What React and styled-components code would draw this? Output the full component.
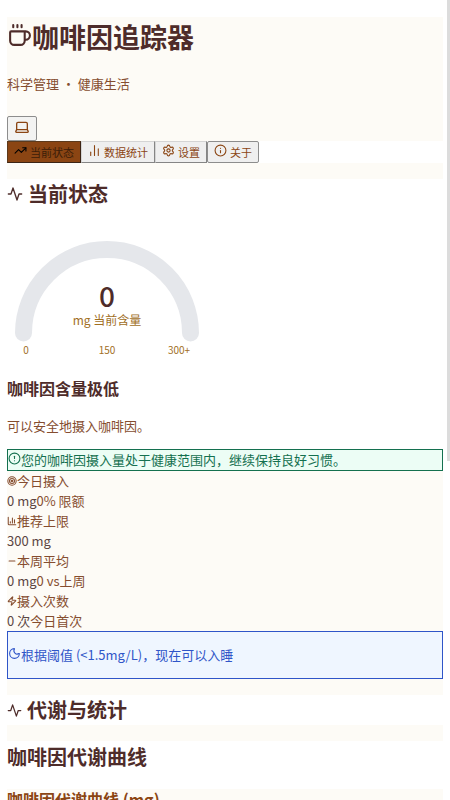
import React, { useState } from "react";
import styled, { createGlobalStyle, css } from "styled-components";
import {
  ChartColumn,
  ChartNoAxesColumn,
  CircleAlert,
  Coffee,
  Info,
  Minus,
  Moon,
  Settings,
  Target,
  TrendingUp,
  Zap,
} from "lucide-react";

const colors = {
  cream: "#fdfbf6",
  espresso: "#4e2c2a",
  text: "#854d2f",
  accent: "#8b4513",
  muted: "#a16f1f",
  track: "#e5e7eb",
};

const GlobalStyle = createGlobalStyle`
  html {
    scrollbar-width: none;
  }

  body {
    margin: 0 7px;
    background: #fff;
    color: ${colors.text};
    font: 13px/20px "Noto Sans CJK SC", sans-serif;
  }
`;

const ScrollThumb = styled.div`
  position: fixed;
  top: 0;
  right: 0;
  width: 3px;
  height: 461px;
  background: #dcdcdc;
`;

const Page = styled.div`
  padding-top: 17px;
`;

const Header = styled.header`
  background: ${colors.cream};
`;

const Title = styled.h1`
  display: flex;
  align-items: center;
  margin: 0;
  color: ${colors.espresso};
  font-size: 27px;
  line-height: 40px;

  svg {
    margin-bottom: 4px;
  }
`;

const Subtitle = styled.p`
  margin: 0;
  padding: 17px 0 22px;
`;

const Button = styled.button`
  margin: 0;
  padding: 0 6px;
  border: 1px solid #8d8d8d;
  border-radius: 2px;
  background: #efefef;
  color: ${colors.accent};
  font: 11px/20px "Noto Sans CJK SC", sans-serif;
  display: inline-flex;
  align-items: center;
  gap: 3px;

  svg {
    margin-bottom: 4px;
  }
`;

const ThemeButton = styled(Button)`
  height: 25px;
  vertical-align: top;
  background: #f3f3f2;
`;

const Tabs = styled.nav`
  display: flex;
`;

const Tab = styled(Button)`
  &:not(:last-child) {
    border-color: #d4d4d4 #858585 #858585 #d4d4d4;
    border-radius: 0;
  }

  ${({ $active }) =>
    $active &&
    css`
      &&:not(:last-child) {
        border-color: #5d3a1c #3c2415 #3c2415 #5d3a1c;
      }
      background: ${colors.accent};
      color: #000;

      span {
        color: #3c1d08;
      }
    `}
`;

const Content = styled.main`
  padding-top: 16px;
  background: ${colors.cream};
`;

const Section = styled.section`
  background: #fff;
`;

const SectionTitle = styled.h2`
  display: flex;
  align-items: center;
  gap: 5px;
  margin: 0;
  padding-bottom: ${({ $flush }) => ($flush ? "0" : "16px")};
  background: #fff;
  color: ${colors.espresso};
  font-size: 20px;
  line-height: 30px;
`;

const Gauge = styled.svg`
  display: block;
  width: 200px;
  height: 133px;
  font-family: "Noto Sans CJK SC", sans-serif;
`;

const Status = styled.div`
  padding: 18px 0 13px;

  h3 {
    margin: 0;
    color: ${colors.espresso};
    font-size: 16px;
    line-height: 24px;
  }

  p {
    margin: 0;
    padding-top: 16px;
  }
`;

const Notice = styled.div`
  display: flex;
  align-items: center;
  padding: ${({ $roomy }) => ($roomy ? "13px 0" : "0")};
  border: 1px solid;
  color: ${({ $tone }) => ($tone === "info" ? "#2f55c8" : "#14704f")};
  background: ${({ $tone }) => ($tone === "info" ? "#eff6ff" : "#ecfdf5")};

  svg {
    margin-bottom: 3px;
  }
`;

const Stats = styled.dl`
  margin: 0;

  dt {
    display: flex;
    align-items: center;
  }

  dd {
    margin: 0;
  }
`;

const Value = styled.span`
  color: #5c4643;
`;

const Gap = styled.div`
  height: 16px;
`;

const ChartHeading = styled.h2`
  margin: 0;
  padding-bottom: 16px;
  background: #fff;
  color: ${colors.espresso};
  font-size: 20px;
  line-height: 32px;
`;

const ChartCaption = styled.h3`
  margin: 0;
  color: ${colors.accent};
  font-size: 16px;
  line-height: 20px;
`;

const TABS = [
  { id: "status", label: "当前状态", icon: TrendingUp },
  { id: "stats", label: "数据统计", icon: ChartNoAxesColumn },
  { id: "settings", label: "设置", icon: Settings },
  { id: "about", label: "关于", icon: Info },
];

const STATS = [
  { label: "今日摄入", value: "0 mg", note: "0% 限额", icon: Target },
  { label: "推荐上限", value: "300 mg", icon: ChartColumn },
  { label: "本周平均", value: "0 mg", note: "0 vs上周", icon: Minus },
  { label: "摄入次数", value: "0 次", note: "今日首次", icon: Zap },
];

function LineIcon({ size, d }) {
  return (
    <svg
      width={size}
      height={size}
      viewBox="0 0 24 24"
      fill="none"
      stroke="currentColor"
      strokeWidth="2"
      strokeLinecap="round"
      strokeLinejoin="round"
      aria-hidden="true"
    >
      <path d={d} />
    </svg>
  );
}

const Pulse = ({ size }) => <LineIcon size={size} d="M22 12h-4l-3 9L9 3l-3 9H2" />;

const Laptop = ({ size }) => (
  <LineIcon
    size={size}
    d="M20 16V7a2 2 0 0 0-2-2H6a2 2 0 0 0-2 2v9m16 0H4m16 0 1.28 2.55a1 1 0 0 1-.9 1.45H3.62a1 1 0 0 1-.9-1.45L4 16"
  />
);

function CaffeineGauge() {
  return (
    <Gauge viewBox="0 0 200 133" role="img" aria-label="当前含量">
      <path
        d="M16.5 108 A83.5 83.5 0 0 1 183.5 108"
        fill="none"
        stroke={colors.track}
        strokeWidth="17"
        strokeLinecap="round"
      />
      <text x="100" y="82" textAnchor="middle" fontSize="28" fontWeight="500" fill={colors.espresso}>0</text>
      <text x="100" y="100" textAnchor="middle" fontSize="12" fill={colors.muted}>mg 当前含量</text>
      <g fontSize="10" textAnchor="middle" fill={colors.muted}>
        <text x="19" y="129">0</text>
        <text x="100" y="129">150</text>
        <text x="172" y="129">300+</text>
      </g>
    </Gauge>
  );
}

function App() {
  const [tab, setTab] = useState("status");

  return (
    <>
      <GlobalStyle />
      <Page>
        <Header>
          <Title><Coffee size={25} strokeWidth={2} />咖啡因追踪器</Title>
          <Subtitle>科学管理 · 健康生活</Subtitle>
          <ThemeButton type="button" aria-label="主题"><Laptop size={16} /></ThemeButton>
        </Header>
        <Tabs>
          {TABS.map(({ id, label, icon: Icon }) => (
            <Tab key={id} type="button" $active={tab === id} onClick={() => setTab(id)}>
              <Icon size={13} />
              <span>{label}</span>
            </Tab>
          ))}
        </Tabs>
        <Content>
          <Section>
            <SectionTitle><Pulse size={16} />当前状态</SectionTitle>
            <CaffeineGauge />
            <Status>
              <h3>咖啡因含量极低</h3>
              <p>可以安全地摄入咖啡因。</p>
            </Status>
          </Section>
          <Notice><CircleAlert size={13} />您的咖啡因摄入量处于健康范围内，继续保持良好习惯。</Notice>
          <Stats>
            {STATS.map(({ label, value, note, icon: Icon }) => (
              <React.Fragment key={label}>
                <dt><Icon size={10} strokeWidth={2.5} />{label}</dt>
                <dd><Value>{value}</Value>{note}</dd>
              </React.Fragment>
            ))}
          </Stats>
          <Notice $tone="info" $roomy><Moon size={13} />根据阈值 (&lt;1.5mg/L)，现在可以入睡</Notice>
          <Gap />
          <SectionTitle $flush><Pulse size={15} />代谢与统计</SectionTitle>
          <Gap />
          <ChartHeading>咖啡因代谢曲线</ChartHeading>
          <ChartCaption>咖啡因代谢曲线 (mg)</ChartCaption>
        </Content>
      </Page>
      <ScrollThumb />
    </>
  );
}

export default App;
